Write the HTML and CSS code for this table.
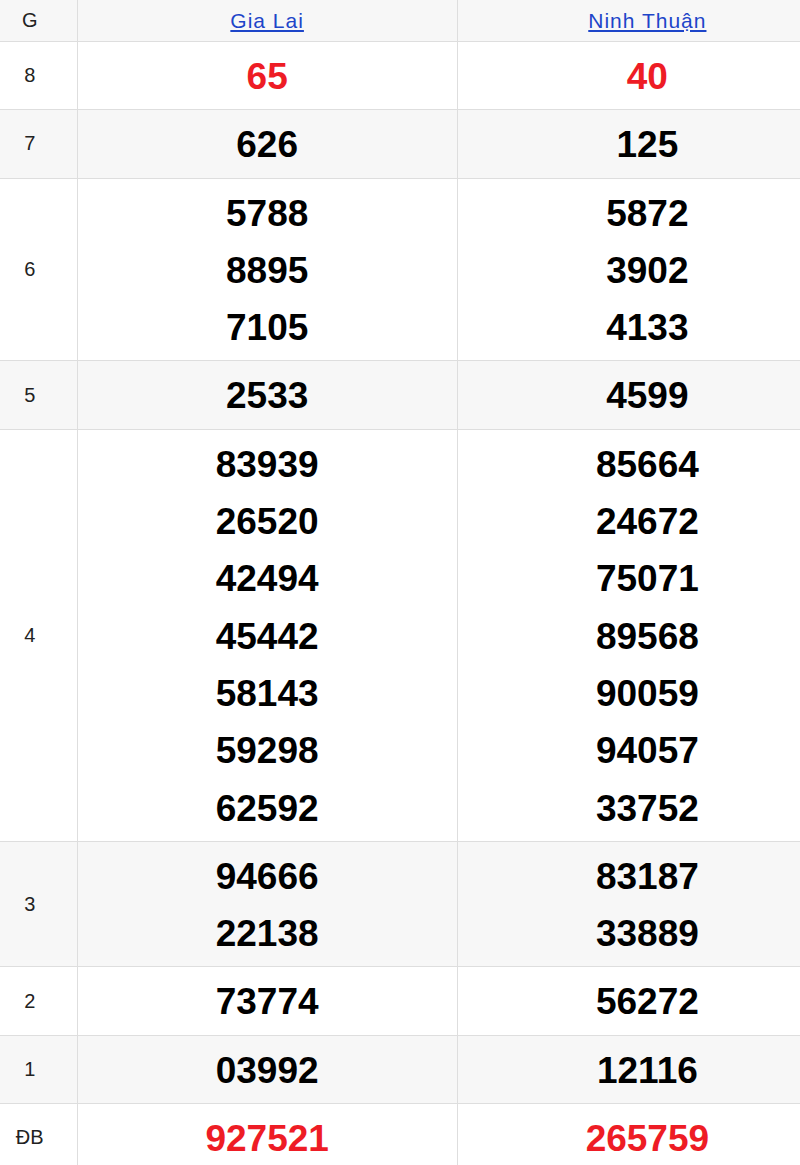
FILE: index.html
```html
<!DOCTYPE html>
<html lang="vi">
<head>
<meta charset="utf-8">
<title>Kết quả xổ số</title>
<link rel="stylesheet" href="styles.css">
</head>
<body>
<table class="kq">
  <colgroup>
    <col class="c-label">
    <col class="c-prov">
    <col class="c-prov">
  </colgroup>
  <thead>
    <tr class="alt head">
      <th class="label">G</th>
      <th><a href="#">Gia Lai</a></th>
      <th><a href="#">Ninh Thuận</a></th>
    </tr>
  </thead>
  <tbody>
    <tr>
      <td class="label">8</td>
      <td class="num red"><div>65</div></td>
      <td class="num red"><div>40</div></td>
    </tr>
    <tr class="alt">
      <td class="label">7</td>
      <td class="num"><div>626</div></td>
      <td class="num"><div>125</div></td>
    </tr>
    <tr>
      <td class="label">6</td>
      <td class="num"><div>5788</div><div>8895</div><div>7105</div></td>
      <td class="num"><div>5872</div><div>3902</div><div>4133</div></td>
    </tr>
    <tr class="alt">
      <td class="label">5</td>
      <td class="num"><div>2533</div></td>
      <td class="num"><div>4599</div></td>
    </tr>
    <tr>
      <td class="label">4</td>
      <td class="num"><div>83939</div><div>26520</div><div>42494</div><div>45442</div><div>58143</div><div>59298</div><div>62592</div></td>
      <td class="num"><div>85664</div><div>24672</div><div>75071</div><div>89568</div><div>90059</div><div>94057</div><div>33752</div></td>
    </tr>
    <tr class="alt">
      <td class="label">3</td>
      <td class="num"><div>94666</div><div>22138</div></td>
      <td class="num"><div>83187</div><div>33889</div></td>
    </tr>
    <tr>
      <td class="label">2</td>
      <td class="num"><div>73774</div></td>
      <td class="num"><div>56272</div></td>
    </tr>
    <tr class="alt">
      <td class="label">1</td>
      <td class="num"><div>03992</div></td>
      <td class="num"><div>12116</div></td>
    </tr>
    <tr>
      <td class="label">ĐB</td>
      <td class="num red"><div>927521</div></td>
      <td class="num red"><div>265759</div></td>
    </tr>
  </tbody>
</table>
</body>
</html>
```
FILE: styles.css
```css
html, body {
  margin: 0;
  padding: 0;
  background: #fff;
  overflow: hidden;
}
body {
  font-family: "Liberation Sans", Arial, sans-serif;
  color: #222;
}
.kq {
  border-collapse: collapse;
  table-layout: fixed;
  width: 838px;
}
.c-label { width: 77px; }
.c-prov { width: 380px; }
.kq th, .kq td {
  border: 1px solid #dedede;
  border-top: none;
  border-left: none;
  text-align: center;
  vertical-align: middle;
  padding: 0;
}
.kq tr.alt th, .kq tr.alt td {
  background: #f7f7f7;
}
.head th {
  height: 41px;
  font-weight: normal;
  font-size: 21px;
  letter-spacing: 1px;
  color: #222;
}
.head th.label {
  font-size: 20px;
  letter-spacing: 0;
}
.head a {
  color: #1d45c9;
  text-decoration: underline;
}
.kq .label {
  font-size: 20px;
  color: #222;
  padding-right: 17px;
}
.num {
  padding: 6px 0 4px !important;
  font-size: 37px;
  font-weight: bold;
  color: #000;
  line-height: 57.3px;
}
.num.red {
  color: #ee1c25;
}
```
